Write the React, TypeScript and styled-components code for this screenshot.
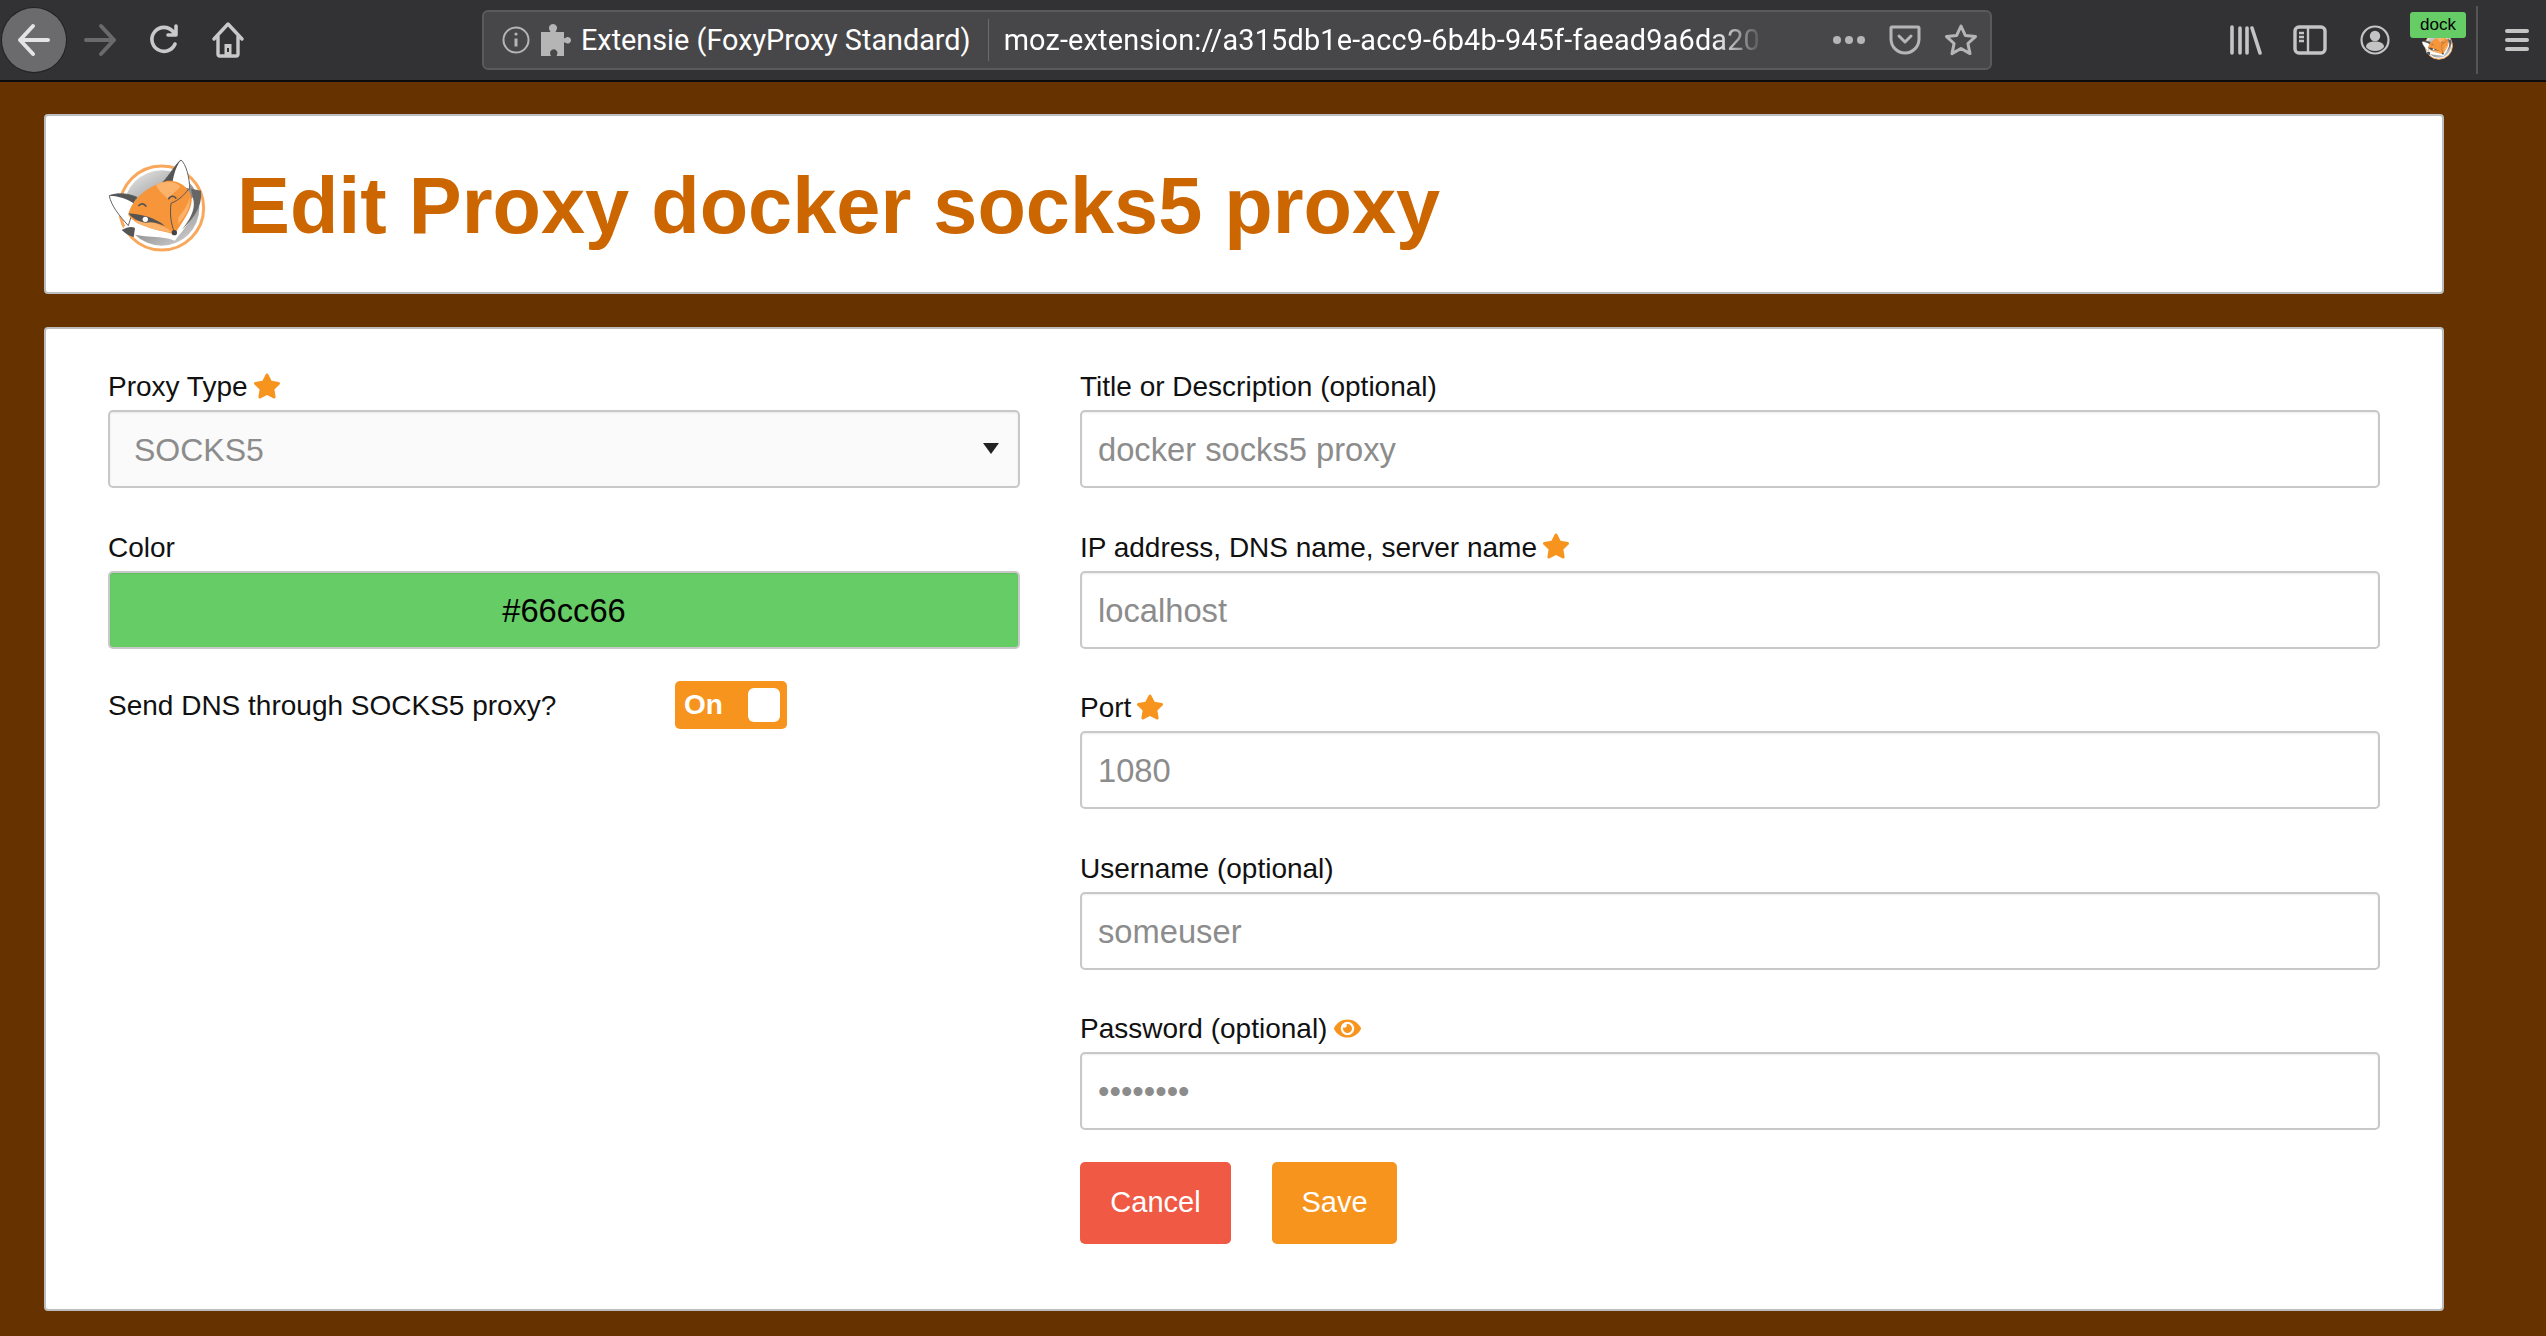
import React from 'react';
import styled, { createGlobalStyle } from 'styled-components';
import { FaStar, FaEye } from 'react-icons/fa';

const GlobalStyle = createGlobalStyle`
  html, body {
    margin: 0;
    padding: 0;
    background: #663300;
  }
  * {
    box-sizing: border-box;
  }
`;

const ORANGE = '#f7941d';

function FoxLogo({ size = 130 }: { size?: number }) {
  return (
    <svg width={size} height={(size * 360) / 390} viewBox="0 0 390 360">
      <defs>
        <linearGradient id="disc" x1="0.2" y1="0" x2="0.8" y2="1">
          <stop offset="0" stopColor="#e2e2e2" />
          <stop offset="0.55" stopColor="#8a8a8a" />
          <stop offset="1" stopColor="#cfcfcf" />
        </linearGradient>
      </defs>
      <circle cx="212" cy="192" r="126" fill="#fff" stroke="#f9a75a" strokeWidth="9" />
      <circle cx="212" cy="192" r="113" fill="url(#disc)" />
      {/* ruff below the face */}
      <path
        d="M92 258 C105 245 112 228 112 210 L300 165 L330 140 C335 190 290 240 252 290 C210 272 135 285 92 258Z"
        fill="#fff"
      />
      <path d="M92 258 C110 248 122 246 132 252 L128 280 C115 276 102 268 92 258Z" fill="#555" />
      <path d="M330 140 L300 134 L308 172 C312 200 296 228 272 258 C305 225 335 190 330 140Z" fill="#666" />
      {/* ears */}
      <path d="M55 155 C80 146 112 148 138 160 L112 245 C85 215 60 185 55 155Z" fill="#fff" stroke="#666" strokeWidth="3" />
      <path d="M55 155 C80 146 112 148 138 160 L128 178 C105 162 80 156 55 155Z" fill="#555" />
      <path d="M270 48 C285 60 296 100 296 136 L215 115 C235 95 258 55 270 48Z" fill="#fff" stroke="#666" strokeWidth="3" />
      <path d="M270 48 C258 55 235 95 215 115 L245 112 C250 85 258 62 270 48Z" fill="#555" />
      {/* face */}
      <path
        d="M112 212 C122 165 170 125 230 110 C272 108 304 140 302 170 C300 205 268 240 252 270 C215 262 130 245 112 212Z"
        fill="#f7953a"
      />
      <path d="M195 122 C225 108 255 112 268 128 C258 140 240 150 232 168 C222 150 205 148 195 122Z" fill="#fbb26a" />
      <path d="M130 232 C165 226 205 240 232 256 L246 266 C205 262 155 250 130 232Z" fill="#fbb26a" />
      <path d="M262 220 C280 200 292 180 296 160 C300 190 285 215 262 240Z" fill="#fbb26a" />
      <path d="M112 208 C150 210 195 222 222 246 C198 236 180 232 165 236 C142 234 122 222 112 208Z" fill="#555" />
      <circle cx="163" cy="226" r="8" fill="#fff" />
      <path d="M142 186 C150 176 160 178 166 188 M232 166 C238 154 250 154 256 164" fill="none" stroke="#555" strokeWidth="5" />
      <path d="M240 178 C265 168 280 152 292 136 M240 178 C236 210 240 240 250 264" fill="none" stroke="#555" strokeWidth="3" />
      <circle cx="250" cy="266" r="8" fill="#444" />
    </svg>
  );
}

const Toolbar = styled.header`
  display: flex;
  align-items: center;
  height: 82px;
  padding: 0 0 0 2px;
  background: #323234;
  border-bottom: 2px solid #0c0c0d;
`;

const NavGroup = styled.div`
  display: flex;
  align-items: center;
  width: 480px;
`;

const BackCircle = styled.div`
  display: flex;
  align-items: center;
  justify-content: center;
  width: 64px;
  height: 64px;
  border-radius: 50%;
  background: #6b6b6d;
  box-shadow: 0 0 0 1px #222;
`;

const NavIcon = styled.svg<{ $ml: number; $dim?: boolean }>`
  margin-left: ${({ $ml }) => $ml}px;
  color: ${({ $dim }) => ($dim ? '#6a6a6c' : '#c9c9ca')};
  flex: none;
`;

const UrlBar = styled.div`
  display: flex;
  align-items: center;
  width: 1510px;
  height: 60px;
  padding: 0 12px 0 18px;
  background: #474749;
  border: 2px solid #5a5a5c;
  border-radius: 6px;
`;

const Identity = styled.span`
  margin-left: 9px;
  color: #fff;
  font-family: Roboto, sans-serif;
  font-size: 28.8px;
  white-space: nowrap;
`;

const UrlDivider = styled.div`
  width: 1px;
  height: 42px;
  margin: 0 15px 0 17px;
  background: #6b6b6d;
  flex: none;
`;

const UrlText = styled.span`
  flex: 1;
  overflow: hidden;
  color: #fff;
  font-family: Roboto, sans-serif;
  font-size: 28.8px;
  letter-spacing: 0.2px;
  white-space: nowrap;
  -webkit-mask-image: linear-gradient(to right, #000 93%, transparent 100%);
  mask-image: linear-gradient(to right, #000 93%, transparent 100%);
`;

const BarIcon = styled.svg<{ $ml: number }>`
  margin-left: ${({ $ml }) => $ml}px;
  flex: none;
`;

const RightTools = styled.div`
  display: flex;
  align-items: center;
  flex: 1;
  height: 100%;
`;

const AddonButton = styled.div`
  position: relative;
  width: 42px;
  height: 40px;
  margin: 10px 0 0 26px;
  flex: none;
`;

const Badge = styled.span`
  position: absolute;
  top: -13px;
  left: -6px;
  width: 56px;
  height: 26px;
  background: #66cc66;
  border-radius: 3px;
  color: #000;
  font-family: 'Liberation Sans', sans-serif;
  font-size: 17px;
  line-height: 26px;
  text-align: center;
`;

const ToolDivider = styled.div`
  width: 2px;
  height: 68px;
  margin-left: 18px;
  background: #555;
  flex: none;
`;

const Page = styled.main`
  display: flex;
  flex-direction: column;
  gap: 33px;
  width: 2400px;
  margin-left: 44px;
  padding: 32px 0 26px;
  font-family: 'Liberation Sans', Arial, sans-serif;
`;

const Card = styled.section`
  background: #fff;
  border: 2px solid #bdbdbd;
  border-radius: 4px;
`;

const TitleCard = styled(Card)`
  display: flex;
  align-items: center;
  height: 180px;
  padding-left: 45px;
`;

const Title = styled.h1`
  margin: 4px 0 0 16px;
  color: #cc6600;
  font-size: 79.3px;
  font-weight: 700;
  white-space: nowrap;
`;

const FormCard = styled(Card)`
  display: grid;
  grid-template-columns: 912px 1300px;
  column-gap: 60px;
  height: 984px;
  padding: 33px 62px 0;
`;

const Column = styled.div`
  display: flex;
  flex-direction: column;
`;

const Field = styled.div`
  display: flex;
  flex-direction: column;
  height: 160.6px;
`;

const Label = styled.div`
  display: flex;
  align-items: center;
  gap: 5px;
  height: 48px;
  padding-top: 2px;
  color: #111;
  font-size: 28px;
`;

const Star = styled(FaStar)`
  margin-bottom: 3px;
  color: ${ORANGE};
  font-size: 28px;
`;

const Eye = styled(FaEye)`
  margin: 0 0 1px 2px;
  color: ${ORANGE};
  font-size: 27px;
`;

const InputBox = styled.div`
  display: flex;
  align-items: center;
  height: 78px;
  padding: 2px 16px 0;
  background: #fff;
  border: 2px solid #c8c8c8;
  border-radius: 5px;
  box-shadow: inset 0 1px 2px rgba(0, 0, 0, 0.08);
  color: #8c8c8c;
  font-size: 32.7px;
  white-space: nowrap;
`;

const SelectBox = styled(InputBox)`
  position: relative;
  padding-left: 24px;
  background: #fafafa;
  font-size: 32px;

  &::after {
    content: '';
    position: absolute;
    right: 19px;
    top: 31px;
    border-left: 8px solid transparent;
    border-right: 8px solid transparent;
    border-top: 11px solid #222;
  }
`;

const ColorBox = styled(InputBox)`
  justify-content: center;
  background: #66cc66;
  color: #000;
`;

const ToggleRow = styled.div`
  display: flex;
  align-items: center;
  justify-content: space-between;
  width: 679px;
  margin-top: -2px;
`;

const ToggleLabel = styled.span`
  padding-top: 2px;
  color: #111;
  font-size: 28px;
`;

const Toggle = styled.div`
  display: flex;
  align-items: center;
  justify-content: space-between;
  width: 112px;
  height: 48px;
  padding: 0 7px 0 9px;
  background: ${ORANGE};
  border-radius: 5px;
  color: #fff;
  font-size: 28px;
  font-weight: 700;
`;

const ToggleKnob = styled.span`
  width: 32px;
  height: 34px;
  background: #fff;
  border-radius: 6px;
`;

const Buttons = styled.div`
  display: flex;
  gap: 41px;
  margin-top: -3px;
`;

const Button = styled.div<{ $bg: string; $w: number }>`
  display: flex;
  align-items: center;
  justify-content: center;
  width: ${({ $w }) => $w}px;
  height: 82px;
  background: ${({ $bg }) => $bg};
  border-radius: 5px;
  color: #fff;
  font-size: 29px;
`;

export default function App() {
  return (
    <>
      <GlobalStyle />
      <Toolbar>
        <NavGroup>
          <BackCircle>
            <svg width="36" height="36" viewBox="0 0 36 36" fill="none" stroke="#e4e4e4" strokeWidth="4" strokeLinecap="round" strokeLinejoin="round">
              <path d="M32 18H4M17 4L4 18l13 14" />
            </svg>
          </BackCircle>
          <NavIcon $ml={16} $dim width="36" height="36" viewBox="0 0 36 36" fill="none" stroke="currentColor" strokeWidth="4" strokeLinecap="round" strokeLinejoin="round">
            <path d="M4 18h28M19 4l13 14-13 14" />
          </NavIcon>
          <NavIcon $ml={31} width="30" height="32" viewBox="0 0 30 32" fill="none" stroke="currentColor" strokeWidth="3.6" strokeLinecap="round" strokeLinejoin="round">
            <path d="M26 20a12 12 0 1 1-2-12.5L27 10V2M27 11h-8" />
          </NavIcon>
          <NavIcon $ml={33} width="32" height="36" viewBox="0 0 32 36" fill="none" stroke="currentColor" strokeWidth="3.4" strokeLinecap="round" strokeLinejoin="round">
            <path d="M2 17L16 2l14 15M6 14v18a2 2 0 0 0 2 2h16a2 2 0 0 0 2-2V14" />
            <rect x="12.5" y="22" width="7" height="12" fill="currentColor" stroke="none" />
            <rect x="15" y="26" width="2" height="4" fill="#323234" stroke="none" />
          </NavIcon>
        </NavGroup>
        <UrlBar>
          <svg width="28" height="28" viewBox="0 0 28 28" fill="none" stroke="#b5b5b6" strokeWidth="2">
            <circle cx="14" cy="14" r="12.5" />
            <path d="M14 12.5v8" strokeWidth="3" />
            <circle cx="14" cy="8" r="1.6" fill="#b5b5b6" stroke="none" />
          </svg>
          <BarIcon $ml={10} width="32" height="34" viewBox="0 0 32 34" fill="#b5b5b6">
            <path d="M1 9h9.5C9 6.5 8.5 5 9.5 3a4 4 0 0 1 7 0c1 2 .5 3.500-1 6H24v6.500c2.500-1.500 4-2 5.500-1a3.200 3.200 0 0 1 0 5.500c-1.500 1-3 .5-5.500-1V33h-7.500c1-2 1.300-3.500.3-5a3.500 3.500 0 0 0-6.100 0c-1 1.500-.700 3 .3 5H1z" />
          </BarIcon>
          <Identity>Extensie (FoxyProxy Standard)</Identity>
          <UrlDivider />
          <UrlText>moz-extension://a315db1e-acc9-6b4b-945f-faead9a6da20</UrlText>
          <BarIcon $ml={67} width="34" height="10" viewBox="0 0 34 10" fill="#b5b5b6">
            <circle cx="5" cy="5" r="4" />
            <circle cx="17" cy="5" r="4" />
            <circle cx="29" cy="5" r="4" />
          </BarIcon>
          <BarIcon $ml={23} width="32" height="32" viewBox="0 0 32 32" fill="none" stroke="#b5b5b6" strokeWidth="3" strokeLinecap="round" strokeLinejoin="round">
            <path d="M3 3h26a1 1 0 0 1 1 1v11a14 14 0 0 1-28 0V4a1 1 0 0 1 1-1zM10 12l6 6 6-6" />
          </BarIcon>
          <BarIcon $ml={23} width="34" height="34" viewBox="0 0 34 34" fill="none" stroke="#b5b5b6" strokeWidth="3" strokeLinejoin="round">
            <path d="M17 3l4.300 9.400 10.200 1.200-7.600 6.900 2.100 10.100L17 25.500l-9 5.100 2.100-10.100-7.600-6.900 10.200-1.200z" />
          </BarIcon>
        </UrlBar>
        <RightTools>
          <BarIcon $ml={238} width="32" height="30" viewBox="0 0 32 30" fill="none" stroke="#c4c4c5" strokeWidth="3.6" strokeLinecap="round">
            <path d="M2 2v26M10 3v25M17 3v25M22 3l8 25" />
          </BarIcon>
          <BarIcon $ml={31} width="34" height="30" viewBox="0 0 34 30" fill="none" stroke="#c4c4c5" strokeWidth="3.4">
            <rect x="2" y="2" width="30" height="26" rx="4" />
            <path d="M15 2v26M6 8h5M6 12h5M6 16h5" strokeWidth="2.4" />
          </BarIcon>
          <BarIcon $ml={33} width="30" height="30" viewBox="0 0 30 30" fill="none" stroke="#c4c4c5" strokeWidth="2.2">
            <circle cx="15" cy="15" r="13.5" />
            <circle cx="15" cy="11" r="5.2" fill="#c4c4c5" stroke="none" />
            <path d="M6 22c0-4 4-5.500 9-5.500s9 1.500 9 5.500c-2 2.500-5 4-9 4s-7-1.500-9-4z" fill="#c4c4c5" stroke="none" />
          </BarIcon>
          <AddonButton>
            <FoxLogo size={42} />
            <Badge>dock</Badge>
          </AddonButton>
          <ToolDivider />
          <BarIcon $ml={27} width="24" height="24" viewBox="0 0 24 24" fill="#c4c4c5">
            <rect y="1" width="24" height="4" rx="2" />
            <rect y="10" width="24" height="4" rx="2" />
            <rect y="19" width="24" height="4" rx="2" />
          </BarIcon>
        </RightTools>
      </Toolbar>
      <Page>
        <TitleCard>
          <FoxLogo size={130} />
          <Title>Edit Proxy docker socks5 proxy</Title>
        </TitleCard>
        <FormCard>
          <Column>
            <Field>
              <Label>
                Proxy Type <Star />
              </Label>
              <SelectBox>SOCKS5</SelectBox>
            </Field>
            <Field>
              <Label>Color</Label>
              <ColorBox>#66cc66</ColorBox>
            </Field>
            <ToggleRow>
              <ToggleLabel>Send DNS through SOCKS5 proxy?</ToggleLabel>
              <Toggle>
                On
                <ToggleKnob />
              </Toggle>
            </ToggleRow>
          </Column>
          <Column>
            <Field>
              <Label>Title or Description (optional)</Label>
              <InputBox>docker socks5 proxy</InputBox>
            </Field>
            <Field>
              <Label>
                IP address, DNS name, server name <Star />
              </Label>
              <InputBox>localhost</InputBox>
            </Field>
            <Field>
              <Label>
                Port <Star />
              </Label>
              <InputBox>1080</InputBox>
            </Field>
            <Field>
              <Label>Username (optional)</Label>
              <InputBox>someuser</InputBox>
            </Field>
            <Field>
              <Label>
                Password (optional) <Eye />
              </Label>
              <InputBox>••••••••</InputBox>
            </Field>
            <Buttons>
              <Button $bg="#f05a45" $w={151}>Cancel</Button>
              <Button $bg={ORANGE} $w={125}>Save</Button>
            </Buttons>
          </Column>
        </FormCard>
      </Page>
    </>
  );
}
